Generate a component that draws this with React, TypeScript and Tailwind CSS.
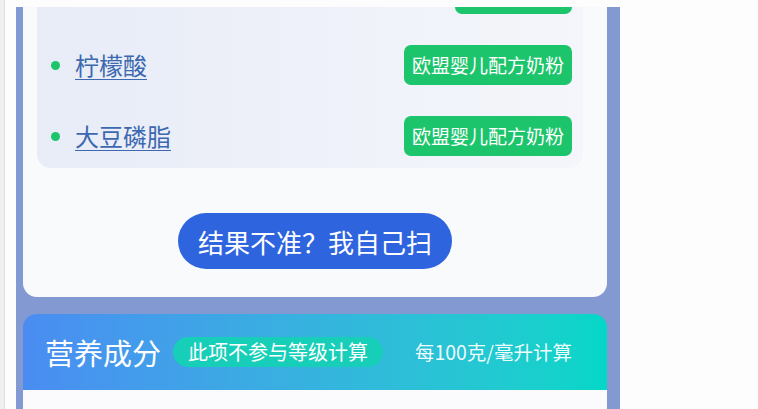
const ingredients = [
  { name: '柠檬酸', tag: '欧盟婴儿配方奶粉' },
  { name: '大豆磷脂', tag: '欧盟婴儿配方奶粉' },
];

function IngredientRow({ name, tag }: { name: string; tag: string }) {
  return (
    <div className="flex h-[40px] shrink-0 items-center justify-between">
      <div className="flex items-center gap-[15px]">
        <span className="h-[9px] w-[9px] rounded-full bg-[#1cc56b]" />
        <a className="text-[24px] leading-none text-[#3c68b0] underline underline-offset-[4px] decoration-1">
          {name}
        </a>
      </div>
      <span className="flex h-[40px] items-center rounded-[7px] bg-[#1cc56b] px-[8px] text-[19px] text-white">
        {tag}
      </span>
    </div>
  );
}

export default function App() {
  return (
    <div
      className="flex h-[409px] w-[758px] overflow-hidden bg-[#fdfdfd]"
      style={{ fontFamily: '"Noto Sans CJK SC", "Noto Sans", sans-serif' }}
    >
      {/* left browser edge */}
      <div className="h-full w-[5px] shrink-0 border-r border-[#dedede] bg-[#f0f0f0]" />

      {/* phone frame */}
      <div className="ml-[11px] mt-[7px] flex w-[604px] shrink-0 flex-col bg-[#8299d2] pl-[7px] pr-[13px]">
        {/* ingredient card */}
        <div className="flex h-[290px] shrink-0 flex-col overflow-hidden rounded-b-[14px] bg-[#f9fafc]">
          <div className="ml-[14px] mr-[24px] flex h-[161px] shrink-0 flex-col justify-end gap-[31px] overflow-hidden rounded-b-[14px] bg-gradient-to-r from-[#e8ecf7] to-[#f4f6fb] pb-[12px] pl-[14px] pr-[11px]">
            {/* bottom edge of the previous tag, scrolled away */}
            <div className="flex h-[40px] shrink-0 justify-end">
              <span className="h-[40px] w-[117px] rounded-[7px] bg-[#1cc56b]" />
            </div>
            {ingredients.map((item) => (
              <IngredientRow key={item.name} name={item.name} tag={item.tag} />
            ))}
          </div>
          <button className="mt-[45px] flex h-[56px] w-[274px] items-center justify-center self-center rounded-full bg-[#2f64df] text-[26px] text-white">
            结果不准？我自己扫
          </button>
        </div>

        {/* nutrition header */}
        <div className="mt-[17px] flex h-[76px] shrink-0 items-center rounded-t-[14px] bg-gradient-to-r from-[#4a8cf2] to-[#04d7c7] pl-[22px] pr-[35px]">
          <span className="text-[29px] leading-none text-white">营养成分</span>
          <span className="ml-[12px] flex h-[30px] items-center rounded-full bg-[#17cfb8] px-[15px] text-[20px] text-white">
            此项不参与等级计算
          </span>
          <span className="ml-auto text-[19.5px] text-white/95">每100克/毫升计算</span>
        </div>
        <div className="flex-1 bg-[#fbfbfd]" />
      </div>
    </div>
  );
}
